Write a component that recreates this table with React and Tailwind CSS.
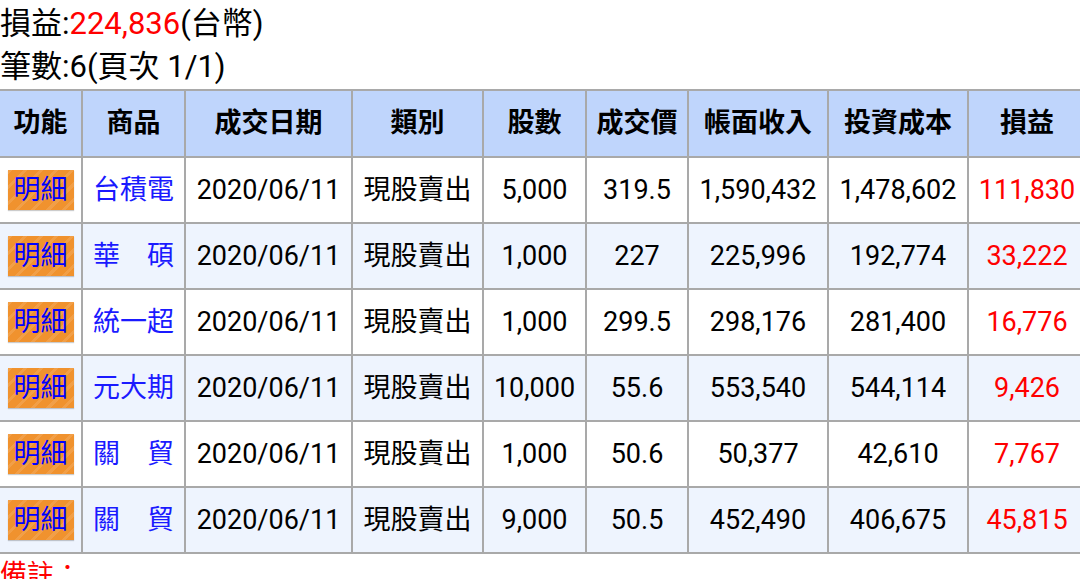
import React from "react";

const rows = [
  ["台積電", "5,000", "319.5", "1,590,432", "1,478,602", "111,830"],
  ["華　碩", "1,000", "227", "225,996", "192,774", "33,222"],
  ["統一超", "1,000", "299.5", "298,176", "281,400", "16,776"],
  ["元大期", "10,000", "55.6", "553,540", "544,114", "9,426"],
  ["關　貿", "1,000", "50.6", "50,377", "42,610", "7,767"],
  ["關　貿", "9,000", "50.5", "452,490", "406,675", "45,815"],
];

const headers = ["功能", "商品", "成交日期", "類別", "股數", "成交價", "帳面收入", "投資成本", "損益"];
const widths = [82, 103, 167, 131, 103, 102, 140, 140, 118];

const cell = "border-2 border-[#a9a9a9] text-center p-0 whitespace-nowrap";

export default function App() {
  return (
    <div
      className="w-[1080px] h-[579px] overflow-hidden bg-white text-black text-[27px]"
      style={{ fontFamily: "Roboto, 'Noto Sans CJK TC', 'Noto Sans', sans-serif" }}
    >
      <div className="text-[31px] leading-[46px] h-[45px] pt-[1px]">
        損益:<span className="text-[#ff0000]">224,836</span>(台幣)
      </div>
      <div className="text-[31px] leading-[44px] h-[44px]">筆數:6(頁次 1/1)</div>
      <table className="table-fixed border-collapse w-[1086px] border-l-0">
        <colgroup>
          {widths.map((w, i) => (
            <col key={i} style={{ width: w }} />
          ))}
        </colgroup>
        <thead>
          <tr className="h-[67px] bg-[#bfd5fc]">
            {headers.map((h, i) => (
              <th key={i} className={`${cell} font-bold ${i === 0 ? "border-l-0" : ""}`}>
                {h}
              </th>
            ))}
          </tr>
        </thead>
        <tbody>
          {rows.map((r, ri) => (
            <tr key={ri} className={`h-[66px] ${ri % 2 === 1 ? "bg-[#eef4fe]" : "bg-white"}`}>
              <td className={`${cell} border-l-0`}>
                <div className="flex justify-center">
                  <span className="w-[66px] h-[40px] flex items-center justify-center text-[#0000ff] bg-[#f0922e] bg-[repeating-linear-gradient(135deg,rgba(255,255,255,0.12)_0px,rgba(255,255,255,0.12)_3px,transparent_3px,transparent_11px)] shadow-[0_1px_1px_rgba(0,0,0,0.2)] leading-none">
                    明細
                  </span>
                </div>
              </td>
              <td className={`${cell} text-[#1a1aff]`}>{r[0]}</td>
              <td className={cell}>2020/06/11</td>
              <td className={cell}>現股賣出</td>
              <td className={cell}>{r[1]}</td>
              <td className={cell}>{r[2]}</td>
              <td className={cell}>{r[3]}</td>
              <td className={cell}>{r[4]}</td>
              <td className={`${cell} text-[#ff0000]`}>{r[5]}</td>
            </tr>
          ))}
        </tbody>
      </table>
      <div className="text-[#ff0000] leading-[40px] pt-[1px]">備註：</div>
    </div>
  );
}
